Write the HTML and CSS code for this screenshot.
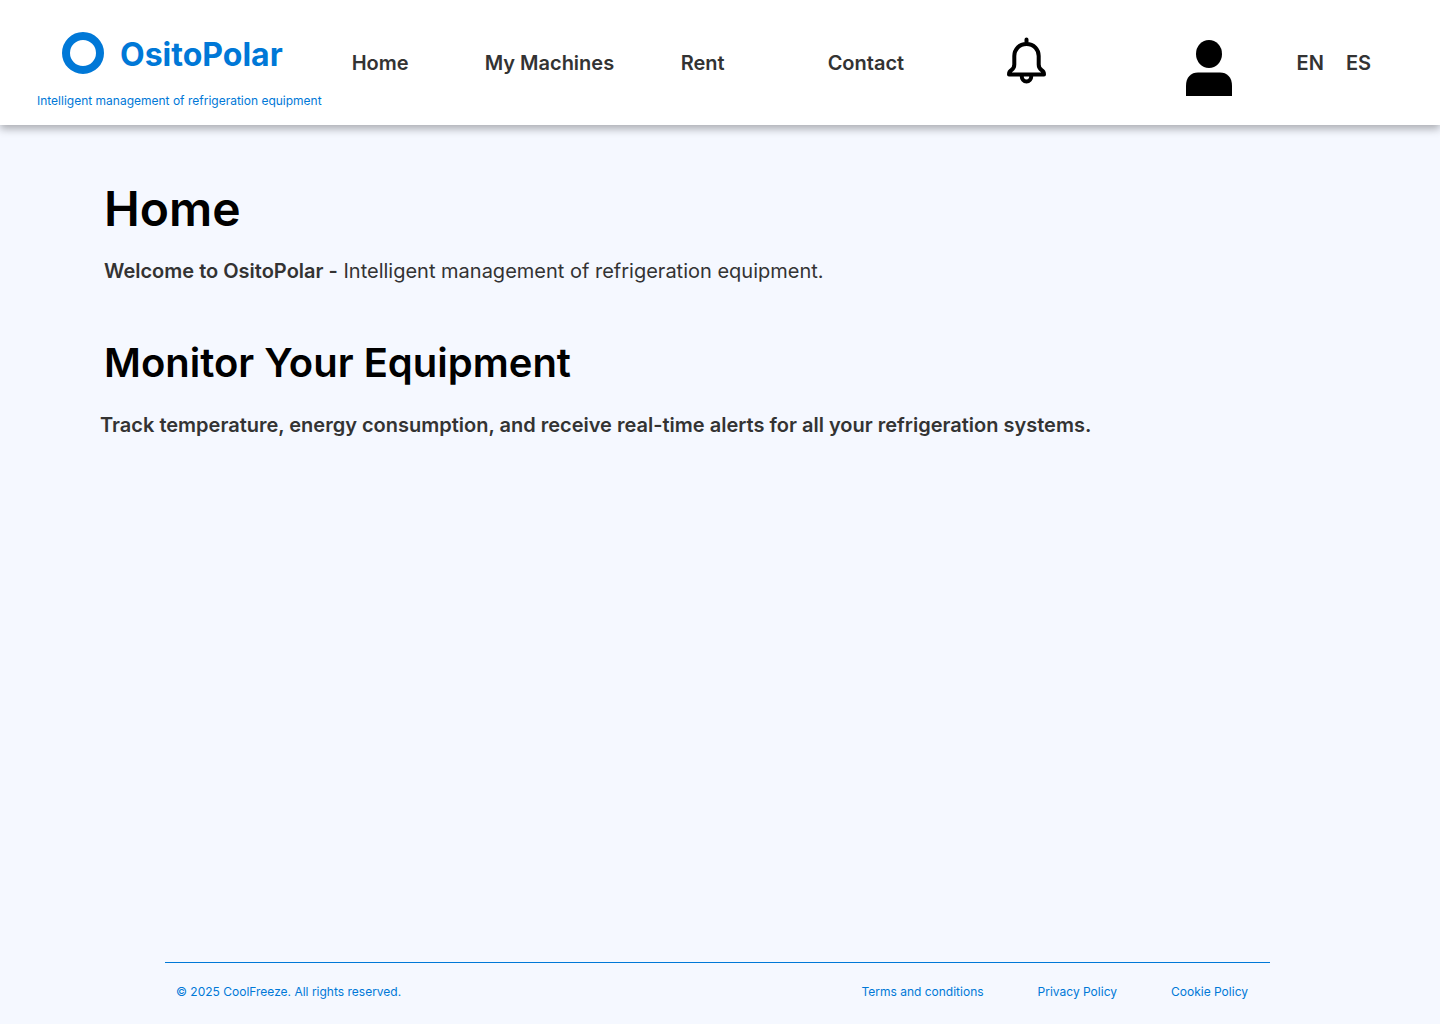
FILE: index.html
```html
<!DOCTYPE html>
<html lang="en">
<head>
<meta charset="utf-8">
<title>OsitoPolar</title>
<link rel="stylesheet" href="styles.css">
</head>
<body>
<header class="header">
  <a class="brand" href="#">
    <span class="brand-row">
      <svg class="brand-mark" viewBox="0 0 42 42" aria-hidden="true"><circle cx="21" cy="21" r="17" fill="none" stroke="currentColor" stroke-width="8"/></svg>
      <span class="brand-name">OsitoPolar</span>
    </span>
    <span class="tagline">Intelligent management of refrigeration equipment</span>
  </a>
  <nav class="nav">
    <a href="#">Home</a>
    <a href="#">My Machines</a>
    <a href="#">Rent</a>
    <a href="#">Contact</a>
  </nav>
  <button class="icon-button bell" aria-label="Notifications">
    <svg width="39" height="48" viewBox="0 0 39 48" fill="none" stroke="currentColor" stroke-width="4" stroke-linecap="round" stroke-linejoin="round" aria-hidden="true"><path d="M19.500 2.500V7M19.500 7C12 7 7.300 12.500 7.300 19v8.500Q7.300 31 4.500 33Q2 34.500 2 37.500H37Q37 34.500 34.500 33Q31.700 31 31.700 27.500V19C31.700 12.500 27 7 19.500 7zM14.700 39a4.800 5.400 0 0 0 9.600 0"/></svg>
  </button>
  <button class="icon-button user" aria-label="Account">
    <svg width="46" height="56" viewBox="0 0 46 56" fill="currentColor" aria-hidden="true"><ellipse cx="23" cy="14" rx="13" ry="14"/><path d="M0 56V46C0 37 5 32.500 12 32.500h22c7 0 12 4.500 12 13.500v10z"/></svg>
  </button>
  <div class="languages">
    <button>EN</button>
    <button>ES</button>
  </div>
</header>
<main class="main">
  <div class="intro">
    <h1>Home</h1>
    <p class="welcome"><strong>Welcome to OsitoPolar -</strong> Intelligent management of refrigeration equipment.</p>
    <h2>Monitor Your Equipment</h2>
  </div>
  <p class="summary">Track temperature, energy consumption, and receive real-time alerts for all your refrigeration systems.</p>
</main>
<footer class="footer">
  <p>© 2025 CoolFreeze. All rights reserved.</p>
  <nav class="legal">
    <a href="#">Terms and conditions</a>
    <a href="#">Privacy Policy</a>
    <a href="#">Cookie Policy</a>
  </nav>
</footer>
</body>
</html>
```
FILE: styles.css
```css
* { box-sizing: border-box; }
body {
  display: flex;
  flex-direction: column;
  min-height: 100vh;
  margin: 0;
  background: #f5f8ff;
  color: #333;
  font-family: Inter, "Liberation Sans", sans-serif;
}
h1, h2, p { margin: 0; }
a { color: inherit; text-decoration: none; }
button {
  padding: 0;
  border: 0;
  background: none;
  color: inherit;
  font: inherit;
  cursor: pointer;
}
.header {
  display: flex;
  align-items: flex-start;
  padding: 32px 69px 16px 37px;
  background: #fff;
  box-shadow: 0 4px 8px rgba(0, 0, 0, 0.3);
  font-size: 20px;
  font-weight: 600;
  line-height: 24px;
}
.brand { color: #0078d7; }
.brand-row { display: flex; align-items: center; gap: 16px; padding-left: 25px; }
.brand-mark { width: 42px; height: 42px; }
.brand-name { padding-top: 4px; font-size: 32px; font-weight: 700; line-height: 38px; }
.tagline { display: block; margin-top: 19px; font-size: 12px; font-weight: 400; line-height: 16px; }
.nav {
  display: grid;
  flex: 1;
  grid-template-columns: 133px 196px 147px auto;
  padding: 19px 0 0 30px;
}
.icon-button { color: #000; }
.icon-button svg { display: block; }
.bell { margin-top: 5px; }
.user { margin: 8px 65px 0 140px; }
.languages { display: flex; gap: 22px; padding-top: 19px; }
.main { flex: 1; padding: 55px 100px; }
.intro { padding-left: 4px; }
h1 { color: #000; font-size: 48px; font-weight: 600; line-height: 58px; }
.welcome { margin-top: 21px; font-size: 20px; line-height: 24px; }
.welcome strong { font-weight: 600; }
h2 { margin-top: 56px; color: #000; font-size: 40px; font-weight: 600; line-height: 48px; }
.summary { margin-top: 26px; font-size: 20px; font-weight: 600; line-height: 24px; }
.footer {
  display: flex;
  justify-content: space-between;
  margin: 0 170px 0 165px;
  padding: 21px 22px 24px 11px;
  border-top: 1px solid #0078d7;
  color: #0078d7;
  font-size: 12px;
  line-height: 16px;
}
.legal { display: flex; gap: 54px; }
```
